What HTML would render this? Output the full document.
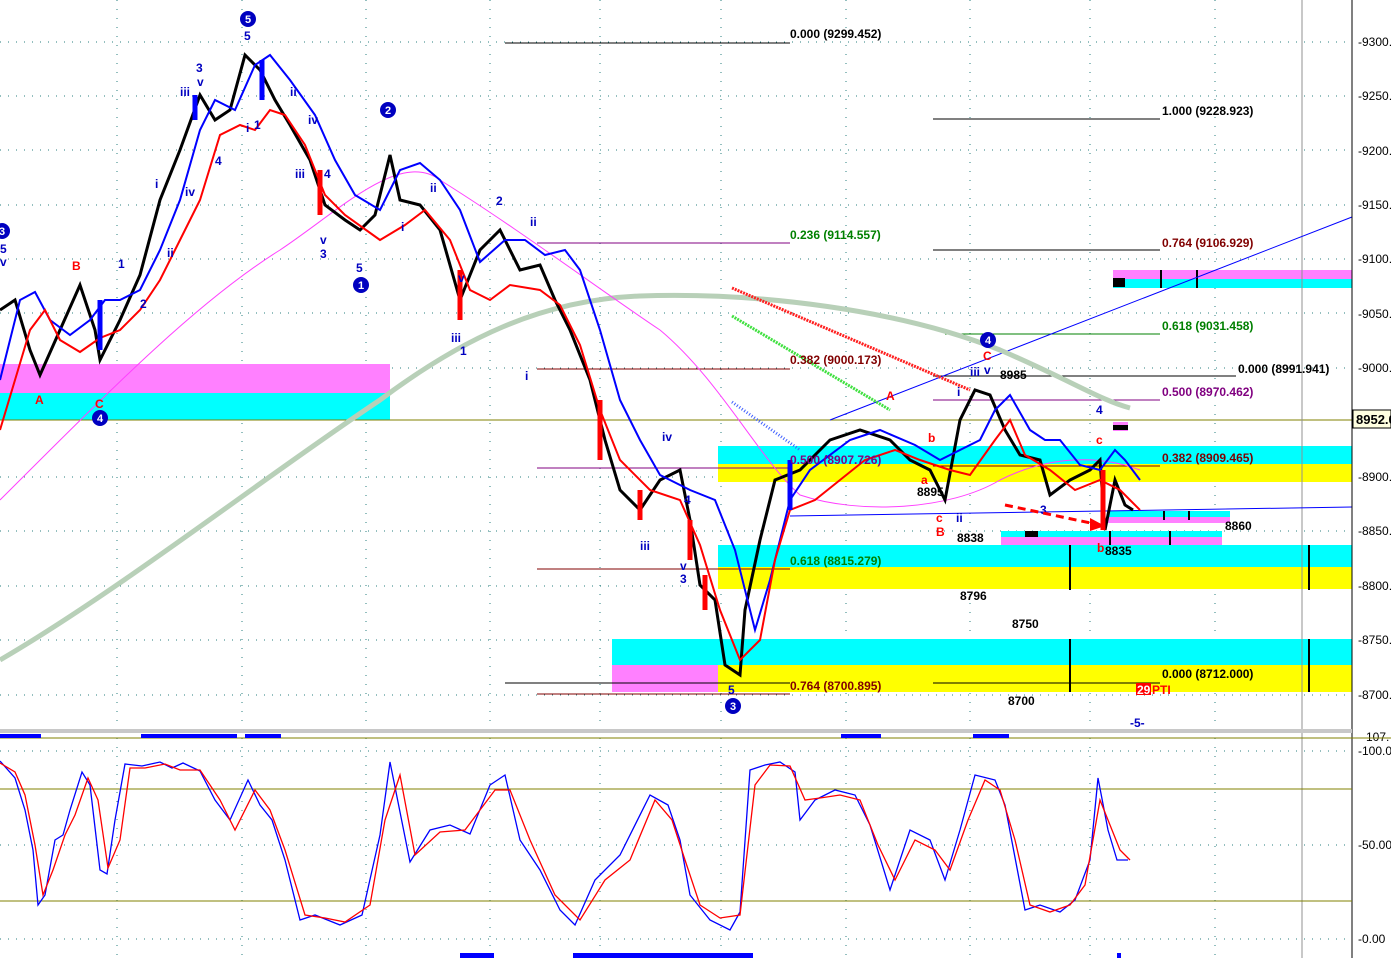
<!DOCTYPE html>
<html><head><meta charset="utf-8"><style>
html,body{margin:0;padding:0;background:#fff;}
svg{display:block;font-family:"Liberation Sans",sans-serif;}
.lb{font-size:12px;font-weight:bold;}
.ax{font-size:12px;font-family:"Liberation Sans",sans-serif;}
</style></head><body>
<svg width="1391" height="958" viewBox="0 0 1391 958" xmlns="http://www.w3.org/2000/svg">
<rect width="1391" height="958" fill="#fff"/>
<!-- grid -->
<g stroke="#2a7f7f" stroke-width="1" stroke-dasharray="1,7">
<line x1="0" y1="42" x2="1352" y2="42"/><line x1="0" y1="96" x2="1352" y2="96"/><line x1="0" y1="150" x2="1352" y2="150"/><line x1="0" y1="205" x2="1352" y2="205"/><line x1="0" y1="259" x2="1352" y2="259"/><line x1="0" y1="313" x2="1352" y2="313"/><line x1="0" y1="368" x2="1352" y2="368"/><line x1="0" y1="477" x2="1352" y2="477"/><line x1="0" y1="531" x2="1352" y2="531"/><line x1="0" y1="586" x2="1352" y2="586"/><line x1="0" y1="640" x2="1352" y2="640"/><line x1="0" y1="695" x2="1352" y2="695"/>
<line x1="0" y1="751" x2="1352" y2="751"/><line x1="0" y1="845" x2="1352" y2="845"/><line x1="0" y1="939" x2="1352" y2="939"/>
</g>
<g stroke="#2a7f7f" stroke-width="1" stroke-dasharray="1,8">
<line x1="117" y1="0" x2="117" y2="958"/><line x1="242" y1="0" x2="242" y2="958"/><line x1="366" y1="0" x2="366" y2="958"/><line x1="490" y1="0" x2="490" y2="958"/><line x1="600" y1="0" x2="600" y2="958"/><line x1="721" y1="0" x2="721" y2="958"/><line x1="846" y1="0" x2="846" y2="958"/><line x1="970" y1="0" x2="970" y2="958"/><line x1="1090" y1="0" x2="1090" y2="958"/><line x1="1215" y1="0" x2="1215" y2="958"/>
</g>
<!-- zones -->
<rect x="0" y="364" width="390" height="29" fill="#ff80ff"/>
<rect x="0" y="393" width="390" height="27" fill="#00ffff"/>
<rect x="1113" y="270" width="239" height="9" fill="#ff80ff"/>
<rect x="1113" y="279" width="239" height="9" fill="#00ffff"/>
<rect x="1113" y="278" width="12" height="9" fill="#000"/>
<rect x="718" y="446" width="634" height="18" fill="#00ffff"/>
<rect x="718" y="464" width="634" height="18" fill="#ffff00"/>
<rect x="718" y="545" width="634" height="22" fill="#00ffff"/>
<rect x="718" y="567" width="634" height="22" fill="#ffff00"/>
<rect x="1001" y="531" width="221" height="6" fill="#00ffff"/>
<rect x="1001" y="537" width="221" height="8" fill="#ff80ff"/>
<rect x="1025" y="531" width="13" height="6" fill="#000"/>
<rect x="1108" y="511" width="122" height="6" fill="#00ffff"/>
<rect x="1108" y="517" width="122" height="6" fill="#ff80ff"/>
<rect x="1113" y="422" width="15" height="9" fill="#ff80ff"/><rect x="1113" y="425" width="15" height="5" fill="#000"/>
<rect x="612" y="639" width="740" height="26" fill="#00ffff"/>
<rect x="612" y="665" width="106" height="27" fill="#ff80ff"/>
<rect x="718" y="665" width="634" height="27" fill="#ffff00"/>
<!-- vertical bars -->
<g stroke="#000" stroke-width="2">
<line x1="1070" y1="545" x2="1070" y2="590"/><line x1="1309" y1="545" x2="1309" y2="590"/>
<line x1="1070" y1="639" x2="1070" y2="692"/><line x1="1309" y1="639" x2="1309" y2="692"/>
<line x1="1161" y1="270" x2="1161" y2="288"/><line x1="1197" y1="270" x2="1197" y2="288"/>
<line x1="1110" y1="531" x2="1110" y2="545"/><line x1="1170" y1="531" x2="1170" y2="545"/>
<line x1="1164" y1="511" x2="1164" y2="520"/><line x1="1189" y1="511" x2="1189" y2="520"/>
</g>
<!-- ref lines -->
<line x1="0" y1="420" x2="1391" y2="420" stroke="#808000"/>
<line x1="1302" y1="0" x2="1302" y2="958" stroke="#909090"/>
<line x1="505" y1="43" x2="790" y2="43" stroke="#000"/>
<line x1="933" y1="119" x2="1160" y2="119" stroke="#000"/>
<line x1="537" y1="243" x2="790" y2="243" stroke="#800080"/>
<line x1="933" y1="250" x2="1160" y2="250" stroke="#000"/>
<line x1="945" y1="334" x2="1160" y2="334" stroke="#008000"/>
<line x1="537" y1="369" x2="790" y2="369" stroke="#800000"/>
<line x1="933" y1="376" x2="1236" y2="376" stroke="#000"/>
<line x1="933" y1="400" x2="1160" y2="400" stroke="#800080"/>
<line x1="537" y1="468" x2="790" y2="468" stroke="#800080"/>
<line x1="933" y1="466" x2="1160" y2="466" stroke="#800000"/>
<line x1="537" y1="569" x2="790" y2="569" stroke="#800000"/>
<line x1="505" y1="683" x2="790" y2="683" stroke="#000"/>
<line x1="537" y1="694" x2="790" y2="694" stroke="#800000"/>
<line x1="933" y1="683" x2="1160" y2="683" stroke="#000"/>
<line x1="790" y1="516" x2="1352" y2="507" stroke="#0000ff"/>
<line x1="830" y1="420" x2="1352" y2="217" stroke="#0000ff"/>
<!-- grey MA -->
<path d="M0,660 C120,590 260,480 380,400 C460,340 540,300 640,296 C760,292 900,310 1000,350 C1070,380 1100,400 1130,408" fill="none" stroke="#b8d0b8" stroke-width="5"/>
<!-- magenta MA -->
<path d="M0,500 C120,380 200,300 280,250 C340,210 400,150 440,180 C520,230 600,290 660,330 C720,380 760,460 800,495 C860,515 950,510 1000,480 C1050,455 1100,455 1140,470" fill="none" stroke="#ff40ff" stroke-width="1"/>
<!-- dotted trend -->
<path d="M732,288 L970,390" stroke="#ff2020" stroke-width="3" stroke-dasharray="2,1" fill="none"/>
<path d="M732,316 L890,410" stroke="#40e040" stroke-width="3" stroke-dasharray="2,1" fill="none"/>
<path d="M732,402 L800,450" stroke="#4060ff" stroke-width="3" stroke-dasharray="1,2" fill="none"/>
<!-- price -->
<path d="M0,310 L15,300 L30,350 L40,375 L60,330 L80,285 L95,330 L100,360 L120,320 L140,275 L160,200 L180,150 L200,95 L215,120 L230,110 L245,55 L260,70 L275,100 L290,125 L310,160 L325,205 L345,220 L360,230 L375,215 L390,155 L400,200 L420,205 L440,230 L460,300 L480,250 L500,230 L520,270 L540,265 L555,300 L570,330 L590,380 L605,440 L620,490 L640,510 L660,480 L680,470 L690,520 L700,585 L715,600 L725,665 L740,675 L745,610 L760,540 L775,480 L800,470 L830,440 L860,430 L890,440 L910,460 L930,470 L945,500 L960,420 L975,390 L990,395 L1005,430 L1020,455 L1040,460 L1050,495 L1070,480 L1090,470 L1100,460 L1105,530 L1115,480 L1125,505 L1133,510" fill="none" stroke="#000" stroke-width="3"/>
<!-- blue MA -->
<path d="M0,380 L20,300 L35,292 L50,320 L70,335 L90,320 L105,300 L120,300 L140,290 L160,250 L180,200 L200,130 L215,100 L235,110 L255,65 L270,55 L290,80 L315,115 L335,160 L355,195 L380,210 L400,170 L420,163 L440,180 L460,210 L480,262 L505,240 L525,240 L545,255 L565,250 L580,270 L600,330 L620,400 L640,440 L660,475 L690,490 L715,500 L735,550 L755,630 L770,580 L790,500 L810,470 L850,440 L880,430 L915,445 L940,460 L960,450 L980,440 L995,410 L1010,395 L1030,430 L1045,440 L1060,440 L1080,465 L1100,470 L1115,450 L1125,460 L1140,480" fill="none" stroke="#0000ff" stroke-width="2"/>
<!-- red MA -->
<path d="M0,430 L15,380 L30,330 L45,310 L60,340 L80,352 L100,338 L120,330 L140,310 L160,280 L180,240 L200,200 L220,135 L240,125 L255,130 L270,110 L285,115 L305,145 L325,195 L345,215 L380,240 L405,225 L425,210 L450,240 L470,290 L490,300 L510,285 L540,290 L560,305 L580,345 L600,410 L620,460 L650,490 L680,500 L700,545 L720,610 L740,660 L760,640 L775,560 L790,510 L815,500 L840,480 L865,460 L895,450 L920,460 L950,470 L970,475 L995,440 L1010,420 L1025,455 L1050,470 L1075,490 L1100,480 L1120,490 L1140,510" fill="none" stroke="#ff0000" stroke-width="2"/>
<!-- red candles hints -->
<g stroke="#ff0000" stroke-width="5">
<line x1="320" y1="170" x2="320" y2="215"/><line x1="460" y1="270" x2="460" y2="320"/><line x1="600" y1="400" x2="600" y2="460"/><line x1="640" y1="490" x2="640" y2="520"/><line x1="690" y1="520" x2="690" y2="560"/><line x1="705" y1="575" x2="705" y2="610"/><line x1="1103" y1="470" x2="1103" y2="530"/>
</g>
<g stroke="#0000ff" stroke-width="5">
<line x1="195" y1="95" x2="195" y2="120"/><line x1="262" y1="60" x2="262" y2="100"/><line x1="100" y1="300" x2="100" y2="350"/><line x1="790" y1="460" x2="790" y2="510"/>
</g>
<!-- fib labels -->
<g class="lb">
<text x="790" y="38" fill="#000">0.000 (9299.452)</text>
<text x="1162" y="115" fill="#000">1.000 (9228.923)</text>
<text x="790" y="239" fill="#008000">0.236 (9114.557)</text>
<text x="1162" y="247" fill="#800000">0.764 (9106.929)</text>
<text x="1162" y="330" fill="#008000">0.618 (9031.458)</text>
<text x="790" y="364" fill="#800000">0.382 (9000.173)</text>
<text x="1238" y="373" fill="#000">0.000 (8991.941)</text>
<text x="1162" y="396" fill="#800080">0.500 (8970.462)</text>
<text x="1162" y="462" fill="#800000">0.382 (8909.465)</text>
<text x="790" y="464" fill="#800080">0.500 (8907.726)</text>
<text x="790" y="565" fill="#008000">0.618 (8815.279)</text>
<text x="1162" y="678" fill="#000">0.000 (8712.000)</text>
<text x="790" y="690" fill="#800000">0.764 (8700.895)</text>
<text x="1000" y="379" fill="#000">8985</text>
<text x="917" y="496" fill="#000">8895</text>
<text x="957" y="542" fill="#000">8838</text>
<text x="1225" y="530" fill="#000">8860</text>
<text x="1105" y="555" fill="#000">8835</text>
<text x="960" y="600" fill="#000">8796</text>
<text x="1012" y="628" fill="#000">8750</text>
<text x="1008" y="705" fill="#000">8700</text>
<text x="1152" y="694" fill="#ff0000">PTI</text>
</g>
<rect x="1136" y="683" width="15" height="12" fill="#ff0000"/><text x="1137" y="694" class="lb" fill="#fff">29</text>
<!-- wave labels blue -->
<g class="lb" fill="#0000c0">
<text x="244" y="40">5</text><text x="196" y="72">3</text><text x="197" y="86">v</text><text x="180" y="96">iii</text><text x="290" y="96">ii</text><text x="308" y="124">iv</text><text x="254" y="129">1</text><text x="246" y="132">i</text><text x="215" y="165">4</text><text x="295" y="178">iii</text><text x="324" y="178">4</text><text x="155" y="188">i</text><text x="185" y="196">iv</text><text x="430" y="192">ii</text><text x="496" y="205">2</text><text x="530" y="226">ii</text><text x="320" y="244">v</text><text x="320" y="258">3</text><text x="356" y="272">5</text><text x="401" y="231">i</text><text x="118" y="268">1</text><text x="140" y="308">2</text><text x="167" y="257">ii</text><text x="458" y="282">v</text><text x="451" y="342">iii</text><text x="460" y="355">1</text><text x="525" y="380">i</text><text x="662" y="441">iv</text><text x="684" y="504">4</text><text x="640" y="550">iii</text><text x="680" y="570">v</text><text x="680" y="583">3</text><text x="728" y="694">5</text><text x="957" y="396">i</text><text x="970" y="376">iii</text><text x="984" y="374">v</text><text x="956" y="522">ii</text><text x="1040" y="514">3</text><text x="1096" y="414">4</text><text x="0" y="253">5</text><text x="0" y="266">v</text><text x="1130" y="727">-5-</text>
</g>
<g class="lb" fill="#ff0000">
<text x="72" y="270">B</text><text x="35" y="404">A</text><text x="95" y="408">C</text><text x="886" y="400">A</text><text x="983" y="360">C</text><text x="928" y="442">b</text><text x="921" y="484">a</text><text x="936" y="522">c</text><text x="936" y="536">B</text><text x="1096" y="444">c</text><text x="1097" y="552">b</text>
</g>
<!-- circled -->
<g font-size="11" font-weight="bold" fill="#fff" text-anchor="middle">
<circle cx="248" cy="19" r="8" fill="#0000c0"/><text x="248" y="23">5</text>
<circle cx="388" cy="110" r="8" fill="#0000c0"/><text x="388" y="114">2</text>
<circle cx="361" cy="285" r="8" fill="#0000c0"/><text x="361" y="289">1</text>
<circle cx="100" cy="418" r="8" fill="#0000c0"/><text x="100" y="422">4</text>
<circle cx="2" cy="231" r="8" fill="#0000c0"/><text x="2" y="235">3</text>
<circle cx="733" cy="706" r="8" fill="#0000c0"/><text x="733" y="710">3</text>
<circle cx="988" cy="340" r="8" fill="#0000c0"/><text x="988" y="344">4</text>
</g>
<path d="M1005,505 L1100,525" stroke="#ff0000" stroke-width="3" stroke-dasharray="8,5"/>
<path d="M1090,518 L1105,526 L1090,531 Z" fill="#ff0000"/>
<!-- axis -->
<line x1="1352" y1="0" x2="1352" y2="958" stroke="#000"/>
<g class="ax" fill="#000">
<text x="1358" y="46">-9300.-</text><text x="1358" y="100">-9250.-</text><text x="1358" y="155">-9200.-</text><text x="1358" y="209">-9150.-</text><text x="1358" y="263">-9100.-</text><text x="1358" y="318">-9050.-</text><text x="1358" y="372">-9000.-</text><text x="1358" y="481">-8900.-</text><text x="1358" y="535">-8850.-</text><text x="1358" y="590">-8800.-</text><text x="1358" y="644">-8750.-</text><text x="1358" y="699">-8700.-</text>
<text x="1358" y="755">-100.0</text><text x="1358" y="849">-50.00</text><text x="1358" y="943">-0.00</text><text x="1366" y="741">107.</text>
</g>
<rect x="1353" y="410" width="38" height="18" fill="#ffffe0" stroke="#000"/>
<text x="1356" y="424" font-size="13" font-weight="bold" font-family="Liberation Sans,sans-serif">8952.0</text>
<!-- lower panel separator -->
<rect x="0" y="729" width="1352" height="4" fill="#c8c8c8"/>
<line x1="0" y1="738" x2="1391" y2="738" stroke="#808000"/>
<g fill="#0000ff">
<rect x="0" y="734" width="41" height="4"/><rect x="141" y="734" width="96" height="4"/><rect x="245" y="734" width="36" height="4"/><rect x="841" y="734" width="40" height="4"/><rect x="973" y="734" width="36" height="4"/>
<rect x="460" y="953" width="34" height="5"/><rect x="573" y="953" width="180" height="5"/><rect x="1117" y="953" width="4" height="5"/>
</g>
<line x1="0" y1="789" x2="1352" y2="789" stroke="#808000"/>
<line x1="0" y1="901" x2="1352" y2="901" stroke="#808000"/>
<!-- stochastic -->
<path d="M0,761 L15,778 L25,810 L33,850 L38,905 L45,895 L55,840 L63,835 L70,810 L82,772 L90,785 L100,870 L107,874 L115,820 L125,764 L142,766 L160,762 L172,768 L183,763 L200,771 L215,800 L230,820 L248,780 L260,805 L272,820 L285,860 L300,920 L315,915 L340,925 L362,915 L380,835 L390,762 L410,862 L430,830 L450,825 L470,834 L490,785 L505,775 L520,840 L540,870 L560,910 L575,925 L595,880 L620,855 L650,795 L668,805 L680,840 L690,895 L710,920 L730,930 L740,912 L750,770 L765,765 L780,762 L795,772 L800,820 L815,800 L835,790 L855,795 L870,825 L890,890 L910,830 L930,840 L945,880 L960,830 L975,775 L995,780 L1005,805 L1025,910 L1040,905 L1060,912 L1075,900 L1090,860 L1098,778 L1108,830 L1117,860 L1128,860" fill="none" stroke="#0000ff" stroke-width="1.3"/>
<path d="M0,763 L15,772 L25,795 L35,845 L43,895 L53,870 L65,835 L75,815 L88,778 L98,800 L108,868 L120,840 L130,768 L145,768 L165,764 L180,770 L200,770 L220,800 L235,830 L255,790 L270,810 L285,850 L305,915 L325,918 L345,922 L370,905 L385,820 L400,775 L415,855 L440,832 L465,830 L495,790 L510,790 L530,840 L555,895 L580,920 L605,880 L630,860 L655,800 L672,820 L685,860 L700,905 L720,918 L740,915 L755,785 L770,765 L790,766 L805,800 L820,798 L840,795 L860,800 L878,845 L895,880 L915,840 L935,850 L950,870 L968,820 L985,780 L1000,790 L1015,840 L1030,905 L1050,912 L1070,905 L1085,885 L1100,800 L1110,825 L1120,850 L1130,860" fill="none" stroke="#ff0000" stroke-width="1.3"/>
</svg>
</body></html>
